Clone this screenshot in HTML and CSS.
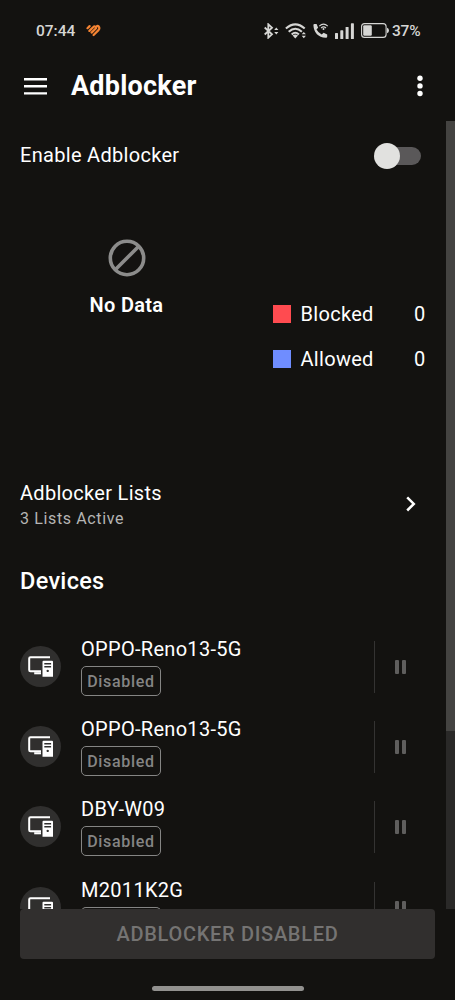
FILE: index.html
```html
<!DOCTYPE html>
<html lang="en">
<head>
<meta charset="utf-8">
<title>Adblocker</title>
<link rel="stylesheet" href="styles.css">
</head>
<body>
<svg class="defs" aria-hidden="true">
  <symbol id="devices" viewBox="0 0 25 21">
    <path d="M22 1.2H2.5Q1.2 1.2 1.2 2.5V13.9Q1.2 15.2 2.5 15.2H13" fill="none" stroke="#fff" stroke-width="2"/>
    <path d="M6.2 16.2H13V18.3H6.2Z" fill="#fff"/>
    <path fill="#fff" fill-rule="evenodd" d="M15.5 4.7H24Q25 4.7 25 5.7V20.7H14.5V5.7Q14.5 4.7 15.5 4.7ZM16.3 6.9V8.4H23.1V6.9ZM16.3 10.1V11.4H23.1V10.1ZM19.7 13.7a1.2 1.2 0 1 0 .01 0Z"/>
  </symbol>
</svg>
<div class="status">
  <span class="clock">07:44</span>
  <svg class="heart" width="15" height="13" viewBox="0 0 15 13" fill="none" stroke="#f58433" stroke-linecap="round" stroke-linejoin="round" stroke-width="2.2"><path d="M1.5 4.2L3.6 2.1M3.4 6.9L7.6 2.8Q8.4 1.9 9.2 2.6M5.6 8.6L10 4.3M7.6 11L12.5 6.1Q14 4.3 12.8 2.6Q11.6 1.4 10.3 2.7"/></svg>
  <div class="indicators">
    <svg width="15" height="16" viewBox="0 0 15 16"><path d="M.7 4.5L8 11.3L4.3 14.7V1.3L8 4.7L.7 11.5" fill="none" stroke="#d6d6d4" stroke-width="1.8"/><path d="M10.2 7L12.3 4.6L14.4 7ZM10.2 9L12.3 11.4L14.4 9Z" fill="#d6d6d4"/></svg>
    <svg width="22" height="16" viewBox="0 0 22 16"><path d="M.9 5.5Q10.3-2.8 19.7 5.5M3.7 8.7Q10.3 2.8 16.9 8.7M6.7 11.5Q10.3 8 13.9 11.5" fill="none" stroke="#d6d6d4" stroke-width="2.1"/><path d="M7.6 12.4Q10.3 10.5 13 12.4L10.3 15.4ZM16.7 11.3L18.8 8.9L20.9 11.3ZM16.7 12.8L18.8 15.2L20.9 12.8Z" fill="#d6d6d4"/></svg>
    <svg width="16" height="16" viewBox="0 0 16 16"><path d="M.4 2.2Q.4 1.2 1.4 1.1L3.6.9L5.1 4.8L3.5 6.4Q5.4 9.8 8.7 11.5L10.6 9.8L14.2 11.5V13.7Q14.2 14.9 12.8 14.8Q1.2 13.7.4 2.2Z" fill="#d6d6d4"/><path d="M6.3 3.2Q10.5-.9 14.8 3.2M8.1 5Q10.5 2.8 13 5" fill="none" stroke="#d6d6d4" stroke-width="1.1"/><circle cx="10.5" cy="6.1" r="1" fill="#d6d6d4"/></svg>
    <svg class="signal" width="19" height="16" viewBox="0 0 19 16" fill="#d6d6d4"><rect y="10" width="3" height="6" rx=".6"/><rect x="5.3" y="7.3" width="3" height="8.7" rx=".6"/><rect x="10.6" y="4" width="3" height="12" rx=".6"/><rect x="15.9" y=".3" width="3" height="15.7" rx=".6"/></svg>
    <svg class="battery" width="28" height="15" viewBox="0 0 28 15"><rect x=".6" y=".6" width="24.5" height="13.8" rx="3" fill="none" stroke="#d6d6d4" stroke-width="1.1"/><rect x="2.2" y="2.2" width="8.6" height="10.6" rx="1.2" fill="#d6d6d4"/><path d="M26 4.7Q28 5.5 28 7.5T26 10.3Z" fill="#d6d6d4"/></svg>
    <span class="percent">37%</span>
  </div>
</div>
<header class="appbar">
  <svg width="23" height="17" viewBox="0 0 23 17" fill="#fff"><path d="M0 0H23V2.4H0ZM0 7.1H23V9.5H0ZM0 14.2H23V16.6H0Z"/></svg>
  <h1>Adblocker</h1>
  <svg class="more" width="6" height="22" viewBox="0 0 6 22" fill="#fff"><circle cx="3" cy="3.3" r="2.7"/><circle cx="3" cy="10.9" r="2.7"/><circle cx="3" cy="18.5" r="2.7"/></svg>
</header>
<div class="viewport">
  <main class="content">
    <div class="enable"><span>Enable Adblocker</span><div class="switch"><i></i></div></div>
    <section class="stats">
      <div class="empty">
        <svg width="38" height="38" viewBox="0 0 38 38" fill="none" stroke="#8c8c8b" stroke-width="3.6"><circle cx="19" cy="19" r="16.7"/><path d="M7.2 30.8L30.8 7.2"/></svg>
        <strong>No Data</strong>
      </div>
      <div class="legend">
        <div class="entry"><i class="red"></i><span>Blocked</span><b>0</b></div>
        <div class="entry"><i class="blue"></i><span>Allowed</span><b>0</b></div>
      </div>
    </section>
    <div class="lists">
      <div><div class="lists-title">Adblocker Lists</div><div class="lists-sub">3 Lists Active</div></div>
      <svg width="10" height="16" viewBox="0 0 10 16" fill="none" stroke="#fff" stroke-width="2.5"><path d="M1.2 1.3L7.8 7.9L1.2 14.5"/></svg>
    </div>
    <h2>Devices</h2>
    <div class="device"><div class="avatar"><svg width="25" height="21"><use href="#devices"/></svg></div><div class="info"><div class="name">OPPO-Reno13-5G</div><div class="chip">Disabled</div></div><div class="pause"><i></i><i></i></div></div>
    <div class="device"><div class="avatar"><svg width="25" height="21"><use href="#devices"/></svg></div><div class="info"><div class="name">OPPO-Reno13-5G</div><div class="chip">Disabled</div></div><div class="pause"><i></i><i></i></div></div>
    <div class="device"><div class="avatar"><svg width="25" height="21"><use href="#devices"/></svg></div><div class="info"><div class="name">DBY-W09</div><div class="chip">Disabled</div></div><div class="pause"><i></i><i></i></div></div>
    <div class="device"><div class="avatar"><svg width="25" height="21"><use href="#devices"/></svg></div><div class="info"><div class="name">M2011K2G</div><div class="chip cut"></div></div><div class="pause"><i></i><i></i></div></div>
  </main>
  <div class="track"><div class="thumb"></div></div>
</div>
<footer>
  <button class="action" disabled>ADBLOCKER DISABLED</button>
  <div class="handle"></div>
</footer>
</body>
</html>
```
FILE: styles.css
```css
* { box-sizing: border-box; }
body { margin: 0; width: 455px; height: 1000px; overflow: hidden; display: flex; flex-direction: column; background: #131210; color: #fff; font: 20px/24px Roboto, sans-serif; }
svg { display: block; flex: none; }
.defs { width: 0; height: 0; position: absolute; }
.status { height: 60px; padding: 0 34px 0 36px; display: flex; align-items: center; color: #d6d6d4; }
.clock { font-size: 15.5px; font-weight: 500; width: 50px; padding-top: 1px; }
.indicators { margin-left: auto; display: flex; align-items: center; gap: 6px; padding-top: 1px; }
.battery { margin-left: 1px; }
.percent { font-size: 15.5px; font-weight: 500; margin-left: -3px; width: 29px; white-space: nowrap; letter-spacing: -.2px; }
.appbar { height: 61px; padding: 0 32.5px 9px 24px; display: flex; align-items: center; }
h1 { margin: 0 0 0 24px; font-size: 27px; line-height: 32px; font-weight: 700; letter-spacing: .22px; }
.more { margin-left: auto; }
.viewport { height: 788px; display: flex; overflow: hidden; }
.content { width: 445.5px; padding: 0 20px; letter-spacing: .3px; }
.enable { height: 69px; padding-right: 5px; display: flex; align-items: center; justify-content: space-between; }
.enable span { padding-bottom: 1px; }
.switch { width: 43px; height: 18px; border-radius: 9px; background: #5a5859; display: flex; align-items: center; }
.switch i { width: 26px; height: 26px; flex: none; margin-left: -4px; border-radius: 50%; background: #e1e1df; }
.stats { height: 265px; display: flex; justify-content: space-between; }
.empty { width: 213px; padding-top: 48.5px; display: flex; flex-direction: column; align-items: center; gap: 16px; }
.empty strong { font-weight: 600; font-size: 20px; }
.legend { width: 153px; padding-top: 112px; display: flex; flex-direction: column; gap: 20.5px; }
.entry { display: flex; align-items: center; }
.entry i { width: 18px; height: 18px; margin-right: 10px; }
.entry b { margin-left: auto; font-weight: 400; }
.red { background: #ff4b50; }
.blue { background: #6f8dff; }
.lists { height: 98px; padding-right: 10px; display: flex; align-items: center; justify-content: space-between; }
.lists-title { padding-top: 3px; }
.lists-sub { margin-top: 2px; font-size: 16px; line-height: 24px; color: #b5b5b4; letter-spacing: .63px; }
h2 { margin: 14px 0 44px; font-size: 23.5px; line-height: 28px; font-weight: 500; }
.device { height: 80.2px; display: flex; align-items: flex-start; }
.avatar { width: 41px; height: 41px; margin: 7px 20px 0 0; border-radius: 50%; background: #302f2e; display: flex; align-items: center; justify-content: center; }
.info { flex: 1; margin-top: -2px; }
.chip { width: 80px; height: 30px; margin-top: 5px; border: 1px solid #858584; border-radius: 5px; font-size: 16px; line-height: 29px; font-weight: 500; text-align: center; color: #858584; letter-spacing: .7px; }
.chip.cut { border-bottom: 0; }
.pause { width: 52px; height: 52px; margin-top: 2px; border-left: 1.5px solid #343332; padding-left: 20px; gap: 3px; display: flex; align-items: center; }
.pause i { width: 4px; height: 14px; border-radius: 1px; background: #5f5e5d; }
.track { width: 9.5px; background: #2a2928; }
.thumb { height: 610px; background: #444341; }
footer { padding: 0 20px; display: flex; flex-direction: column; align-items: center; }
.action { width: 415px; height: 50px; border: 0; padding: 0; border-radius: 4px; background: #312f2e; color: #757473; font: 500 20px/50px Roboto, sans-serif; letter-spacing: .7px; }
.handle { width: 152px; height: 5px; margin-top: 27px; border-radius: 3px; background: #92918f; }
```
